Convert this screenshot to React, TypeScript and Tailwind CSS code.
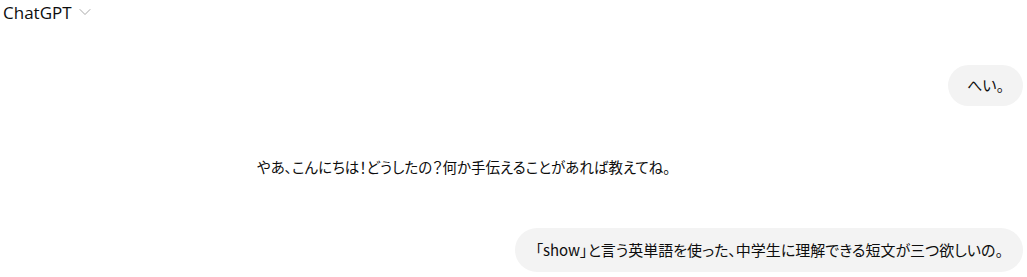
import { ChevronDown } from "lucide-react";

const jp = "font-['Noto_Sans_CJK_JP',sans-serif] [font-feature-settings:'palt']";

export default function App() {
	return (
		<div className="h-[277px] w-full bg-white text-[#0d0d0d] overflow-hidden">
			{/* Header */}
			<div className="flex items-center gap-[3px] pl-[3px] h-[24px]">
				<span className="font-['Open_Sans',sans-serif] text-[17px] leading-none">
					ChatGPT
				</span>
				<ChevronDown className="w-[20px] h-[20px] text-[#a0a0a0]" strokeWidth={1.1} />
			</div>

			{/* Messages */}
			<div className={`flex flex-col ${jp}`}>
				<div className="flex justify-end pr-1 mt-[41px]">
					<div className="bg-[#f3f3f3] rounded-[21px] px-[19px] h-[41px] flex items-center text-[15px]">
						へい。
					</div>
				</div>

				<div className="pl-[257px] mt-[50px] h-[22px] flex items-center text-[14.5px]">
					やあ、こんにちは！どうしたの？何か手伝えることがあれば教えてね。
				</div>

				<div className="flex justify-end pr-1 mt-[50px]">
					<div className="bg-[#f3f3f3] rounded-[22px] px-[20px] h-[44px] flex items-center text-[15px]">
						「show」と言う英単語を使った、中学生に理解できる短文が三つ欲しいの。
					</div>
				</div>
			</div>
		</div>
	);
}
